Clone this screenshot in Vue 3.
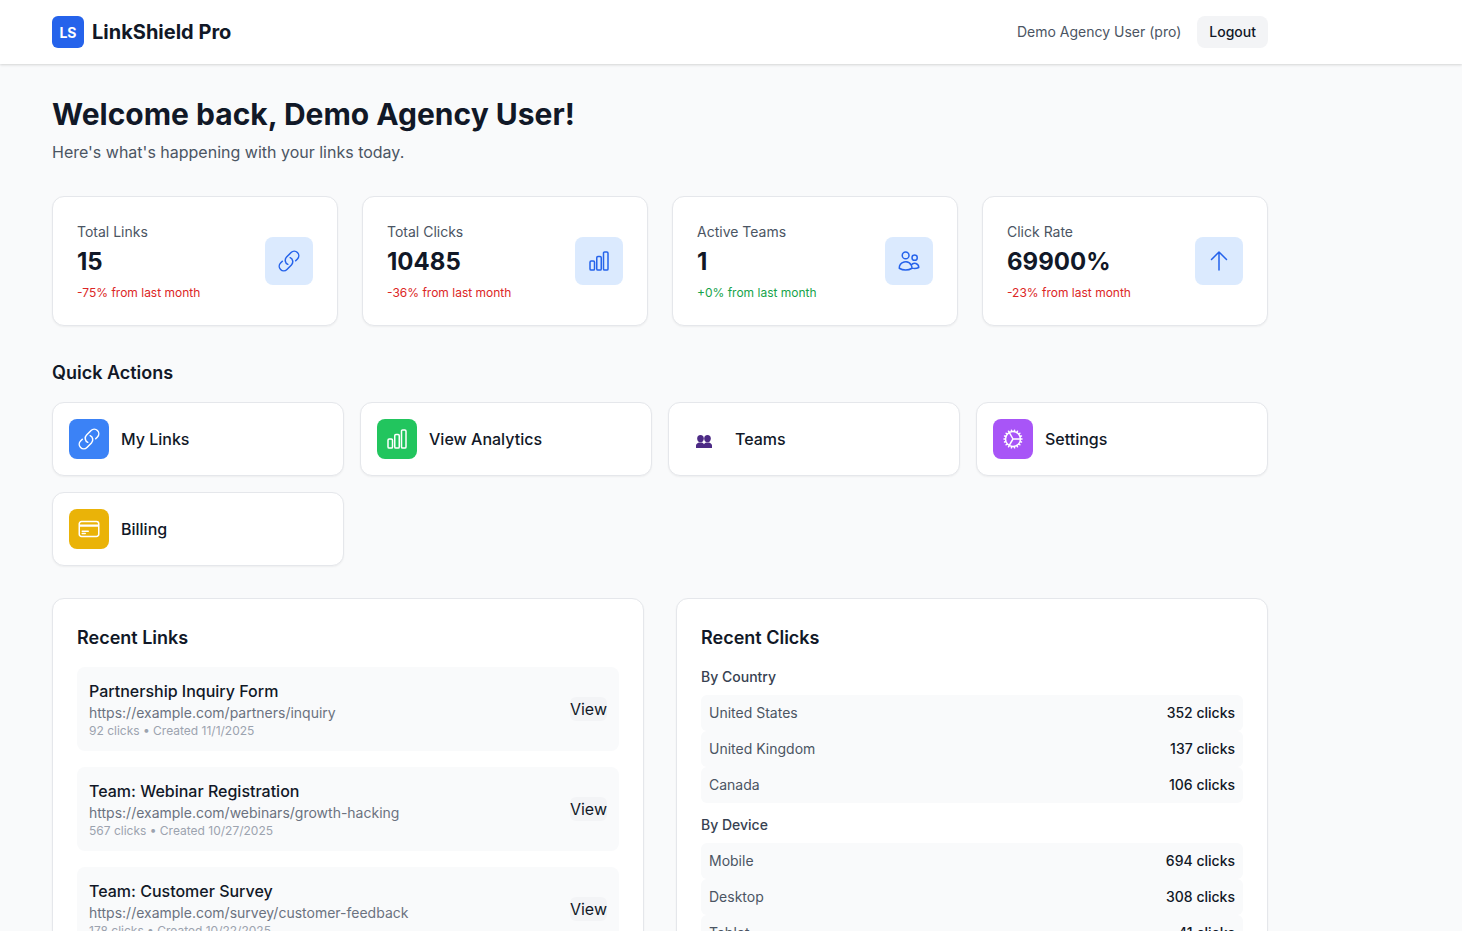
<template>
  <div class="page">
    <header class="topbar">
      <div class="topbar-inner">
        <div class="brand">
          <div class="brand-mark">LS</div>
          <span class="brand-name">LinkShield Pro</span>
        </div>
        <div class="user-box">
          <span class="user-name">Demo Agency User (pro)</span>
          <button class="logout-btn">Logout</button>
        </div>
      </div>
    </header>

    <main class="content">
      <h1 class="welcome">Welcome back, Demo Agency User!</h1>
      <p class="subtitle">Here's what's happening with your links today.</p>

      <div class="stats-grid">
        <div v-for="stat in stats" :key="stat.label" class="stat-card">
          <div>
            <div class="stat-label">{{ stat.label }}</div>
            <div class="stat-value">{{ stat.value }}</div>
            <div class="stat-change" :class="stat.up ? 'up' : 'down'">{{ stat.change }}</div>
          </div>
          <div class="stat-icon">
            <svg width="24" height="24" viewBox="0 0 24 24" fill="none" stroke="#2563eb" stroke-width="1.5" stroke-linecap="round" stroke-linejoin="round">
              <path :d="icons[stat.icon]" />
            </svg>
          </div>
        </div>
      </div>

      <h2 class="section-title">Quick Actions</h2>
      <div class="actions-grid">
        <div v-for="action in actions" :key="action.label" class="action-card">
          <div v-if="action.icon" class="action-icon" :class="action.color">
            <svg width="24" height="24" viewBox="0 0 24 24" fill="none" stroke="#ffffff" stroke-width="1.5" stroke-linecap="round" stroke-linejoin="round">
              <path :d="icons[action.icon]" />
            </svg>
          </div>
          <div v-else class="action-icon plain">
            <svg class="teams-glyph" width="16" height="13" viewBox="0 0 16 13" fill="#4c2a85">
              <ellipse cx="4.5" cy="3.6" rx="3.3" ry="3.6" />
              <ellipse cx="11.5" cy="3.6" rx="3.3" ry="3.6" />
              <path d="M0 13V10.4C0 9 1.4 8 3 7.4H6C7 7.8 7.6 8.4 8 9.2C8.4 8.4 9 7.8 10 7.4H13C14.6 8 16 9 16 10.4V13Z" />
            </svg>
          </div>
          <span class="action-label">{{ action.label }}</span>
        </div>
      </div>

      <div class="panels">
        <section class="panel">
          <h3 class="panel-title">Recent Links</h3>
          <div class="link-list">
            <div v-for="link in links" :key="link.url" class="link-item">
              <div>
                <div class="link-title">{{ link.title }}</div>
                <div class="link-url">{{ link.url }}</div>
                <div class="link-meta">{{ link.meta }}</div>
              </div>
              <button class="view-btn">View</button>
            </div>
          </div>
        </section>

        <section class="panel">
          <h3 class="panel-title">Recent Clicks</h3>
          <div v-for="group in clickGroups" :key="group.name" class="click-group">
            <div class="click-group-name">{{ group.name }}</div>
            <div v-for="row in group.rows" :key="row.name" class="click-row">
              <span class="click-name">{{ row.name }}</span>
              <span class="click-count">{{ row.count }} clicks</span>
            </div>
          </div>
        </section>
      </div>
    </main>
  </div>
</template>

<script setup>
const icons = {
  link: 'M13.19 8.688a4.5 4.5 0 0 1 1.242 7.244l-4.5 4.5a4.5 4.5 0 0 1-6.364-6.364l1.757-1.757m13.35-.622 1.757-1.757a4.5 4.5 0 0 0-6.364-6.364l-4.5 4.5a4.5 4.5 0 0 0 1.242 7.244',
  chart:
    'M3 13.125C3 12.504 3.504 12 4.125 12h2.25c.621 0 1.125.504 1.125 1.125v6.75C7.5 20.496 6.996 21 6.375 21h-2.25A1.125 1.125 0 0 1 3 19.875v-6.75ZM9.75 8.625c0-.621.504-1.125 1.125-1.125h2.25c.621 0 1.125.504 1.125 1.125v11.25c0 .621-.504 1.125-1.125 1.125h-2.25a1.125 1.125 0 0 1-1.125-1.125V8.625ZM16.5 4.125c0-.621.504-1.125 1.125-1.125h2.25C20.496 3 21 3.504 21 4.125v15.75c0 .621-.504 1.125-1.125 1.125h-2.25a1.125 1.125 0 0 1-1.125-1.125V4.125Z',
  users:
    'M15 19.128a9.38 9.38 0 0 0 2.625.372 9.337 9.337 0 0 0 4.121-.952 4.125 4.125 0 0 0-7.533-2.493M15 19.128v-.003c0-1.113-.285-2.16-.786-3.07M15 19.128v.106A12.318 12.318 0 0 1 8.624 21c-2.331 0-4.512-.645-6.374-1.766l-.001-.109a6.375 6.375 0 0 1 11.964-3.07M12 6.375a3.375 3.375 0 1 1-6.75 0 3.375 3.375 0 0 1 6.75 0Zm8.25 2.25a2.625 2.625 0 1 1-5.25 0 2.625 2.625 0 0 1 5.25 0Z',
  up: 'M4.5 10.5 12 3m0 0 7.5 7.5M12 3v18',
  gear: 'M4.5 12a7.5 7.5 0 0 0 15 0m-15 0a7.5 7.5 0 1 1 15 0m-15 0H3m16.5 0H21m-1.5 0H12m-8.457 3.077 1.41-.513m14.095-5.13 1.41-.513M5.106 17.785l1.15-.964m11.49-9.642 1.149-.964M7.501 19.795l.75-1.3m7.5-12.99.75-1.3m-6.063 16.658.26-1.477m2.605-14.772.26-1.477m0 17.726-.26-1.477M10.698 4.614l-.26-1.477M16.5 19.794l-.75-1.299M7.5 4.205 12 12m6.894 5.785-1.149-.964M6.256 7.178l-1.15-.964m15.352 8.864-1.41-.513M4.954 9.435l-1.41-.514M12.002 12l-3.75 6.495',
  card: 'M2.25 8.25h19.5M2.25 9h19.5m-16.5 5.25h6m-6 2.25h3m-3.75 3h15a2.25 2.25 0 0 0 2.25-2.25V6.75A2.25 2.25 0 0 0 19.5 4.5h-15a2.25 2.25 0 0 0-2.25 2.25v10.5A2.25 2.25 0 0 0 4.5 19.5Z',
}

const stats = [
  { label: 'Total Links', value: '15', change: '-75% from last month', up: false, icon: 'link' },
  { label: 'Total Clicks', value: '10485', change: '-36% from last month', up: false, icon: 'chart' },
  { label: 'Active Teams', value: '1', change: '+0% from last month', up: true, icon: 'users' },
  { label: 'Click Rate', value: '69900%', change: '-23% from last month', up: false, icon: 'up' },
]

const actions = [
  { label: 'My Links', icon: 'link', color: 'blue' },
  { label: 'View Analytics', icon: 'chart', color: 'green' },
  { label: 'Teams' },
  { label: 'Settings', icon: 'gear', color: 'purple' },
  { label: 'Billing', icon: 'card', color: 'yellow' },
]

const links = [
  {
    title: 'Partnership Inquiry Form',
    url: 'https://example.com/partners/inquiry',
    meta: '92 clicks • Created 11/1/2025',
  },
  {
    title: 'Team: Webinar Registration',
    url: 'https://example.com/webinars/growth-hacking',
    meta: '567 clicks • Created 10/27/2025',
  },
  {
    title: 'Team: Customer Survey',
    url: 'https://example.com/survey/customer-feedback',
    meta: '178 clicks • Created 10/22/2025',
  },
]

const clickGroups = [
  {
    name: 'By Country',
    rows: [
      { name: 'United States', count: 352 },
      { name: 'United Kingdom', count: 137 },
      { name: 'Canada', count: 106 },
    ],
  },
  {
    name: 'By Device',
    rows: [
      { name: 'Mobile', count: 694 },
      { name: 'Desktop', count: 308 },
      { name: 'Tablet', count: 41 },
    ],
  },
]
</script>

<style>
html,
body {
  height: 100%;
  overflow: hidden;
}
</style>

<style scoped>
.page {
  height: 931px;
  overflow: hidden;
  background: #f9fafb;
  font-family: Inter, 'Liberation Sans', sans-serif;
  color: #111827;
}

.topbar {
  height: 64px;
  background: #ffffff;
  box-shadow: 0 1px 3px rgba(0, 0, 0, 0.1), 0 1px 2px rgba(0, 0, 0, 0.06);
}

.topbar-inner {
  width: 1216px;
  height: 64px;
  margin-left: 52px;
  display: flex;
  align-items: center;
  justify-content: space-between;
}

.brand {
  display: flex;
  align-items: center;
  gap: 8px;
}

.brand-mark {
  width: 32px;
  height: 32px;
  border-radius: 6px;
  background: #2563eb;
  color: #ffffff;
  font-size: 14px;
  font-weight: 700;
  display: flex;
  align-items: center;
  justify-content: center;
}

.brand-name {
  font-size: 20px;
  line-height: 28px;
  font-weight: 700;
}

.user-box {
  display: flex;
  align-items: center;
  gap: 16px;
}

.user-name {
  font-size: 14px;
  line-height: 20px;
  color: #4b5563;
}

.logout-btn {
  height: 32px;
  padding: 0 12px 2px;
  border: 0;
  border-radius: 8px;
  background: #f3f4f6;
  color: #111827;
  font-family: inherit;
  font-size: 14px;
  font-weight: 500;
}

.content {
  width: 1216px;
  margin-left: 52px;
  padding-top: 32px;
}

.welcome {
  margin: 0;
  font-size: 30px;
  line-height: 36px;
  font-weight: 700;
}

.subtitle {
  margin: 8px 0 0;
  font-size: 16px;
  line-height: 24px;
  color: #4b5563;
}

.stats-grid {
  margin-top: 32px;
  display: grid;
  grid-template-columns: repeat(4, 1fr);
  gap: 24px;
}

.stat-card {
  height: 130px;
  box-sizing: border-box;
  padding: 0 24px;
  background: #ffffff;
  border: 1px solid #e5e7eb;
  border-radius: 12px;
  box-shadow: 0 1px 2px rgba(0, 0, 0, 0.05);
  display: flex;
  align-items: center;
  justify-content: space-between;
}

.stat-label {
  font-size: 14px;
  line-height: 22px;
  color: #4b5563;
}

.stat-value {
  margin-top: 3px;
  font-size: 24px;
  line-height: 32px;
  font-weight: 700;
}

.stat-change {
  margin-top: 7px;
  font-size: 12px;
  line-height: 16px;
}

.stat-change.down {
  color: #dc2626;
}

.stat-change.up {
  color: #16a34a;
}

.stat-icon {
  width: 48px;
  height: 48px;
  border-radius: 8px;
  background: #dbeafe;
  display: flex;
  align-items: center;
  justify-content: center;
}

.section-title {
  margin: 32px 0 0;
  font-size: 18px;
  line-height: 30px;
  font-weight: 600;
}

.actions-grid {
  margin-top: 14px;
  display: grid;
  grid-template-columns: repeat(auto-fit, minmax(292px, 1fr));
  gap: 16px;
}

.action-card {
  height: 74px;
  box-sizing: border-box;
  padding: 0 16px;
  background: #ffffff;
  border: 1px solid #e5e7eb;
  border-radius: 12px;
  box-shadow: 0 1px 2px rgba(0, 0, 0, 0.05);
  display: flex;
  align-items: center;
  gap: 12px;
}

.action-icon {
  width: 40px;
  height: 40px;
  border-radius: 8px;
  display: flex;
  align-items: center;
  justify-content: center;
}

.action-icon.plain {
  width: 38px;
}

.teams-glyph {
  margin-top: 5px;
}

.action-icon.blue {
  background: #3b82f6;
}

.action-icon.green {
  background: #22c55e;
}

.action-icon.purple {
  background: #a855f7;
}

.action-icon.yellow {
  background: #eab308;
}

.action-label {
  font-size: 16px;
  line-height: 24px;
  font-weight: 500;
}

.panels {
  margin-top: 32px;
  display: grid;
  grid-template-columns: 1fr 1fr;
  gap: 32px;
}

.panel {
  padding: 24px;
  background: #ffffff;
  border: 1px solid #e5e7eb;
  border-radius: 12px;
  box-shadow: 0 1px 2px rgba(0, 0, 0, 0.05);
}

.panel-title {
  margin: 0;
  font-size: 18px;
  line-height: 30px;
  font-weight: 600;
}

.link-list {
  margin-top: 14px;
  display: flex;
  flex-direction: column;
  gap: 16px;
}

.link-item {
  height: 84px;
  box-sizing: border-box;
  padding: 0 12px;
  background: #f9fafb;
  border-radius: 8px;
  display: flex;
  align-items: center;
  justify-content: space-between;
}

.link-title {
  font-size: 16px;
  line-height: 24px;
  font-weight: 500;
}

.link-url {
  font-size: 14px;
  line-height: 20px;
  color: #6b7280;
}

.link-meta {
  font-size: 12px;
  line-height: 16px;
  color: #9ca3af;
}

.view-btn {
  height: 24px;
  padding: 0;
  border: 0;
  border-radius: 6px;
  background: #f3f4f6;
  color: #111827;
  font-family: inherit;
  font-size: 16px;
}

.click-group {
  margin-top: 14px;
}

.click-group-name {
  font-size: 14px;
  line-height: 20px;
  font-weight: 500;
  color: #374151;
  margin-bottom: 8px;
}

.click-group + .click-group {
  margin-top: 12px;
}

.click-row {
  height: 36px;
  padding: 0 8px;
  background: #f9fafb;
  border-radius: 6px;
  display: flex;
  align-items: center;
  justify-content: space-between;
  font-size: 14px;
  line-height: 20px;
}

.click-name {
  color: #4b5563;
}

.click-count {
  font-weight: 500;
}
</style>
